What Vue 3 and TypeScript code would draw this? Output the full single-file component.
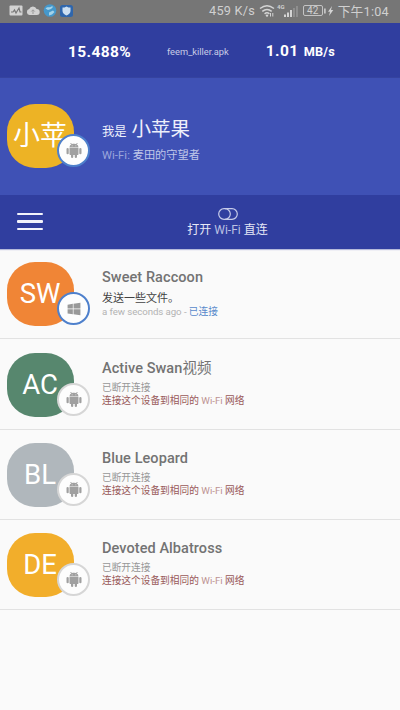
<script setup lang="ts">
interface Peer {
  initials: string
  name: string
  suffix?: string
  color: string
  platform: 'windows' | 'android'
  connected: boolean
}

const peers: Peer[] = [
  { initials: 'SW', name: 'Sweet Raccoon', color: '#f08536', platform: 'windows', connected: true },
  { initials: 'AC', name: 'Active Swan', suffix: '视频', color: '#57876e', platform: 'android', connected: false },
  { initials: 'BL', name: 'Blue Leopard', color: '#b0b7bc', platform: 'android', connected: false },
  { initials: 'DE', name: 'Devoted Albatross', color: '#f2ae2b', platform: 'android', connected: false },
]
</script>

<template>
  <svg class="defs" width="0" height="0" aria-hidden="true">
    <symbol id="android" viewBox="0 0 24 24" preserveAspectRatio="none">
      <path d="M6 18c0 .55.45 1 1 1h1v3.5a1.5 1.5 0 0 0 3 0V19h2v3.5a1.5 1.5 0 0 0 3 0V19h1c.55 0 1-.45 1-1V8H6v10zM3.500 8A1.500 1.500 0 0 0 2 9.500v7a1.500 1.500 0 0 0 3 0v-7A1.500 1.500 0 0 0 3.500 8zm17 0A1.500 1.500 0 0 0 19 9.500v7a1.500 1.500 0 0 0 3 0v-7A1.500 1.500 0 0 0 20.500 8zm-4.970-5.840l1.300-1.300a.5.5 0 0 0-.71-.71l-1.480 1.480A5.840 5.840 0 0 0 12 1c-.96 0-1.860.23-2.660.63L7.850.15a.5.5 0 0 0-.71.71l1.310 1.310A5.980 5.980 0 0 0 6 7h12a5.980 5.980 0 0 0-2.470-4.840zM10 5H9V4h1v1zm5 0h-1V4h1v1z" />
    </symbol>
    <symbol id="windows" viewBox="0 0 24 24">
      <path d="M1 4.500l9-1.300v8.100H1zM11.200 3L23 1.300v10H11.200zM1 12.600h9v8.200l-9-1.300zM11.200 12.600H23v10.100L11.200 21z" />
    </symbol>
  </svg>
  <div class="screen">
    <header class="status">
      <div class="notices">
        <svg width="14" height="11" viewBox="0 0 14 11">
          <rect x=".5" y=".5" width="13" height="10" rx="1" fill="#d2d2d2" />
          <path d="M2 7h2l1.500-2L7 8l3-5 1 4h1.500" fill="none" stroke="#777" stroke-width="1.200" />
        </svg>
        <svg width="14" height="11" viewBox="0 0 14 11">
          <path d="M3.500 10a3 3 0 0 1-.3-5.900A3.900 3.900 0 0 1 10.600 4 3 3 0 0 1 10.800 10z" fill="#d2d2d2" />
          <path d="M7 9V5M5.300 6.500L7 4.800l1.700 1.700" fill="none" stroke="#999" />
        </svg>
        <svg width="14" height="13" viewBox="0 0 14 13">
          <circle cx="7" cy="6.500" r="6.300" fill="#4598cc" />
          <path d="M2.500 4.500c2-2.500 3.500-.5 5-1.500s2-1 2.500 0L8 5 5 6zM6 8.500l4-2 1.500 1.500-2.500 2.500-3 1z" fill="#a4d3ea" />
        </svg>
        <svg width="13" height="12" viewBox="0 0 13 12">
          <rect width="13" height="12" rx="2.500" fill="#2e66ad" />
          <path d="M6.500 1.500c1.400 1 2.500 1 4 1V6c0 2.200-2 3.500-4 4.500-2-1-4-2.300-4-4.500V2.500c1.500 0 2.600 0 4-1z" fill="#cbdff2" />
        </svg>
      </div>
      <div class="system">
        <span class="rate">459 K/s</span>
        <svg class="wifi" width="16" height="13" viewBox="0 0 16 13">
          <path d="M1 4.500q7-5.500 14 0M3.300 7.300q4.700-3.800 9.400 0M5.600 9.800q2.400-1.900 4.800 0" fill="none" stroke="#d4d4d4" stroke-width="1.500" />
          <circle cx="8" cy="11.600" r="1.200" fill="#d4d4d4" />
          <path d="M11.500 12.500V9M13.800 9v3.500" stroke="#d4d4d4" />
        </svg>
        <span class="net">4G</span>
        <svg class="signal" width="14" height="12" viewBox="0 0 14 12">
          <path d="M1 12V9.500M4 12V7.500M7 12V5" stroke="#d4d4d4" stroke-width="2" />
          <path d="M10 12V3M13 12V1" stroke="#929292" stroke-width="1.800" />
        </svg>
        <span class="battery">42</span>
        <svg class="bolt" width="10" height="12" viewBox="0 0 10 12">
          <path d="M.9 3.500v5" stroke="#d4d4d4" stroke-width="1.500" />
          <path d="M8 1L4 6.700h2L5 11l4.300-6H7z" fill="#d4d4d4" />
        </svg>
        <span class="clock">下午1:04</span>
      </div>
    </header>

    <section class="transfer">
      <strong class="percent">15.488%</strong>
      <span class="file">feem_killer.apk</span>
      <strong class="speed">1.01 <small>MB/s</small></strong>
    </section>

    <section class="profile">
      <div class="avatar own">
        <span>小苹</span>
        <i class="badge linked"><svg class="os"><use href="#android" /></svg></i>
      </div>
      <div class="identity">
        <div class="me"><small>我是</small> 小苹果</div>
        <div class="network"><span>Wi-Fi:</span> 麦田的守望者</div>
      </div>
    </section>

    <nav class="toolbar">
      <button class="menu" aria-label="Menu"><i></i><i></i><i></i></button>
      <div class="direct">
        <svg width="20" height="12" viewBox="0 0 20 12" fill="none" stroke="#c6cbe9" stroke-width="1.200">
          <rect x=".7" y=".7" width="18.600" height="10.600" rx="5.300" />
          <path d="M7 .7a5.300 5.300 0 0 1 0 10.600" />
        </svg>
        <span>打开 <em>Wi-Fi</em> 直连</span>
      </div>
    </nav>

    <main>
      <article v-for="peer in peers" :key="peer.initials" class="peer">
        <div class="avatar" :style="{ backgroundColor: peer.color }">
          <span>{{ peer.initials }}</span>
          <i class="badge" :class="{ linked: peer.connected }">
            <svg class="os" :class="peer.platform"><use :href="'#' + peer.platform" /></svg>
          </i>
        </div>
        <div class="details">
          <h2>{{ peer.name }}<span v-if="peer.suffix">{{ peer.suffix }}</span></h2>
          <template v-if="peer.connected">
            <p class="message">发送一些文件。</p>
            <p class="time">a few seconds ago - <b>已连接</b></p>
          </template>
          <template v-else>
            <p class="offline">已断开连接</p>
            <p class="hint">连接这个设备到相同的 <em>Wi-Fi</em> 网络</p>
          </template>
        </div>
      </article>
    </main>
  </div>
</template>

<style>
body { margin: 0; background: #fafafa; }
</style>

<style scoped>
.screen { width: 400px; height: 710px; overflow: hidden; background: #fafafa; font-family: Roboto, "Noto Sans CJK SC", sans-serif; }
.defs { position: absolute; }
svg { display: block; flex: none; }
em { font-style: normal; }
.status { height: 23px; box-sizing: border-box; padding: 0 11px 2px 9px; display: flex; align-items: center; justify-content: space-between; background: #767676; color: #d0d0d0; }
.notices { display: flex; align-items: center; gap: 3px; }
.system { display: flex; align-items: center; white-space: nowrap; }
.rate { font-size: 12.700px; letter-spacing: .25px; }
.wifi { margin-left: 4px; }
.net { margin: -8px 0 0 2px; font-size: 6px; font-weight: 700; }
.signal { margin-left: -1px; }
.battery { box-sizing: border-box; width: 20px; height: 11px; margin-left: 5px; border: 1px solid #c4c4c4; border-radius: 2px; font-size: 10px; line-height: 9.500px; text-align: center; }
.bolt { margin-left: 1px; }
.clock { margin-left: 4px; font-size: 12.700px; letter-spacing: .25px; }

.transfer { height: 55px; box-sizing: border-box; padding: 3px 65px 0 68px; display: grid; grid-template-columns: 99px 1fr auto; align-items: center; background: #303e9f; color: #fff; white-space: nowrap; border-bottom: 1px solid #35439f; }
.percent, .speed { font-size: 15.500px; font-weight: 700; letter-spacing: .4px; line-height: 20px; }
.speed { word-spacing: 1px; }
.speed small { font-size: 12.700px; letter-spacing: .2px; }
.file { font-size: 9.300px; color: #c8cce6; }

.profile { height: 117px; box-sizing: border-box; padding: 26px 0 0 7px; display: flex; align-items: flex-start; gap: 28px; background: #3f51b5; }
.avatar { position: relative; flex: none; width: 67px; height: 64px; border-radius: 28px; display: flex; align-items: center; justify-content: center; color: #fff; font-size: 27.500px; }
.avatar > span { line-height: 64px; padding: 0 1px 0 0; white-space: nowrap; }
.own { background: #edb325; font-size: 27px; }
.badge { position: absolute; left: 50px; top: 30px; width: 33px; height: 33px; box-sizing: border-box; border: 2px solid #d6d6d6; border-radius: 50%; background: #fdfdfd; display: flex; align-items: center; justify-content: center; }
.linked { border: 2px solid #4e80cc; }
.os { width: 18px; height: 15px; fill: #a0a0a0; }
.os.windows { width: 14px; height: 14px; fill: #999; }
.identity { padding-top: 12px; color: #eef0fb; }
.me { font-size: 19.500px; line-height: 27px; }
.me small { font-size: 12.300px; }
.network { font-size: 11.200px; line-height: 16px; margin-top: 2px; color: #c0c7e8; }
.network span { color: #9ba6dc; letter-spacing: .1px; }

.toolbar { height: 54px; display: grid; grid-template-columns: 26px 1fr; align-items: start; box-sizing: border-box; padding: 0 0 0 17px; background: #303e9f; color: #e6e8f6; box-shadow: 0 1px 1px #b5bada; position: relative; }
.menu { margin: 18px 0 0; padding: 0; border: 0; background: none; width: 26px; display: grid; gap: 5px; }
.menu i { height: 2.300px; border-radius: 1px; background: #f2f3fb; }
.direct { display: flex; flex-direction: column; align-items: center; padding: 13px 0 0 12px; font-size: 12px; }
.direct span { line-height: 16px; margin-top: 2px; white-space: nowrap; }
.direct em { color: #bbc1e3; }

.peer { height: 90.300px; box-sizing: border-box; border-bottom: 1px solid #e2e2e2; padding: 13.400px 0 0 7px; display: flex; align-items: flex-start; gap: 28px; }
.details { padding-top: 6px; white-space: nowrap; }
h2 { margin: 0; font-size: 14.500px; line-height: 20px; font-weight: 500; letter-spacing: .07px; color: #737373; }
h2 span { font-weight: 400; letter-spacing: 0; }
p { margin: 0; }
.message { font-size: 11px; line-height: 15px; margin-top: 3px; color: #424242; }
.time { font-size: 9.700px; line-height: 11px; color: #b3b3b3; letter-spacing: -.08px; }
.time b { font-weight: 400; color: #5889cb; letter-spacing: 0; }
.offline { font-size: 9.700px; line-height: 13px; margin-top: 2px; color: #979797; }
.hint { font-size: 9.700px; line-height: 13px; color: #985858; }
.hint em { color: #bd9292; }
</style>
